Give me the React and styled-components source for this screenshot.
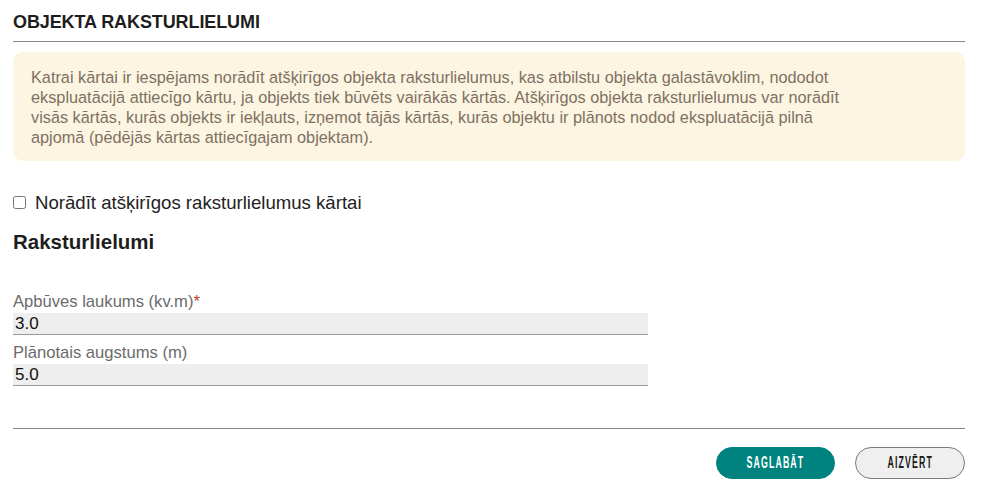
import React from "react";
import styled, { createGlobalStyle } from "styled-components";

const Global = createGlobalStyle`
  html, body { margin: 0; padding: 0; background: #ffffff; }
  body { font-family: "Liberation Sans", Arial, sans-serif; color: #222; }
`;

const Page = styled.div`
  padding: 0 41px 0 13px;
  display: flex;
  flex-direction: column;
`;

const Header = styled.div`
  padding: 11px 0 8px;
  border-bottom: 1px solid #8a8a8a;
`;

const Title = styled.h1`
  margin: 0;
  font-size: 18px;
  line-height: 22px;
  font-weight: 700;
  color: #1d1d1d;
  letter-spacing: -0.1px;
`;

const Info = styled.div`
  margin-top: 10px;
  background: #fcf5e2;
  border-radius: 10px;
  padding: 15px 18px 14px;
`;

const InfoText = styled.p`
  margin: 0;
  max-width: 822px;
  font-size: 16.3px;
  line-height: 20px;
  color: #807062;
`;

const CheckRow = styled.label`
  margin-top: 31px;
  display: flex;
  align-items: center;
  gap: 9px;
  font-size: 18.6px;
  line-height: 21px;
  color: #222;
`;

const Check = styled.input`
  margin: 0;
  width: 13px;
  height: 13px;
`;

const Subtitle = styled.h2`
  margin: 18px 0 0;
  font-size: 20.5px;
  line-height: 22px;
  font-weight: 700;
  color: #1d1d1d;
`;

const Fields = styled.div`
  margin-top: 40px;
  width: 635px;
  display: flex;
  flex-direction: column;
  gap: 9px;
`;

const Field = styled.div`
  display: flex;
  flex-direction: column;
`;

const Label = styled.label`
  font-size: 16.6px;
  line-height: 18px;
  color: #6b6b6b;
  margin-bottom: 2px;
`;

const Req = styled.span`
  color: #c0392b;
`;

const Input = styled.input`
  box-sizing: border-box;
  height: 22px;
  width: 100%;
  margin: 0;
  border: none;
  border-bottom: 1px solid #9a9a9a;
  background: #eeeeee;
  padding: 0 2px;
  font-family: "Liberation Sans", Arial, sans-serif;
  font-size: 17px;
  color: #111;
  outline: none;
`;

const Divider = styled.div`
  margin-top: 42px;
  border-top: 1px solid #8a8a8a;
`;

const Actions = styled.div`
  margin-top: 18px;
  display: flex;
  justify-content: flex-end;
  gap: 20px;
`;

const Button = styled.button`
  box-sizing: border-box;
  height: 32px;
  width: ${(p) => p.$w}px;
  border-radius: 16px;
  border: 1px solid ${(p) => (p.$primary ? "#00837e" : "#7a7a7a")};
  background: ${(p) => (p.$primary ? "#00837e" : "#efefef")};
  color: ${(p) => (p.$primary ? "#ffffff" : "#1a1a1a")};
  padding: 0;
  cursor: pointer;
  display: flex;
  align-items: center;
  justify-content: center;
  overflow: hidden;
`;

const ButtonText = styled.span`
  display: inline-block;
  font-family: "Liberation Sans", Arial, sans-serif;
  font-weight: 700;
  font-size: 16px;
  line-height: 16px;
  letter-spacing: 2px;
  text-transform: uppercase;
  transform: scaleX(0.55);
  white-space: nowrap;
`;

export default function App() {
  return (
    <>
      <Global />
      <Page>
        <Header>
          <Title>OBJEKTA RAKSTURLIELUMI</Title>
        </Header>
        <Info>
          <InfoText>
            Katrai kārtai ir iespējams norādīt atšķirīgos objekta raksturlielumus, kas atbilstu objekta galastāvoklim, nododot ekspluatācijā attiecīgo kārtu, ja objekts tiek būvēts vairākās kārtās. Atšķirīgos objekta raksturlielumus var norādīt visās kārtās, kurās objekts ir iekļauts, izņemot tājās kārtās, kurās objektu ir plānots nodod ekspluatācijā pilnā apjomā (pēdējās kārtas attiecīgajam objektam).
          </InfoText>
        </Info>
        <CheckRow>
          <Check type="checkbox" />
          Norādīt atšķirīgos raksturlielumus kārtai
        </CheckRow>
        <Subtitle>Raksturlielumi</Subtitle>
        <Fields>
          <Field>
            <Label>
              Apbūves laukums (kv.m)<Req>*</Req>
            </Label>
            <Input defaultValue="3.0" />
          </Field>
          <Field>
            <Label>Plānotais augstums (m)</Label>
            <Input defaultValue="5.0" />
          </Field>
        </Fields>
        <Divider />
        <Actions>
          <Button $primary $w={119}>
            <ButtonText>Saglabāt</ButtonText>
          </Button>
          <Button $w={110}>
            <ButtonText>Aizvērt</ButtonText>
          </Button>
        </Actions>
      </Page>
    </>
  );
}
